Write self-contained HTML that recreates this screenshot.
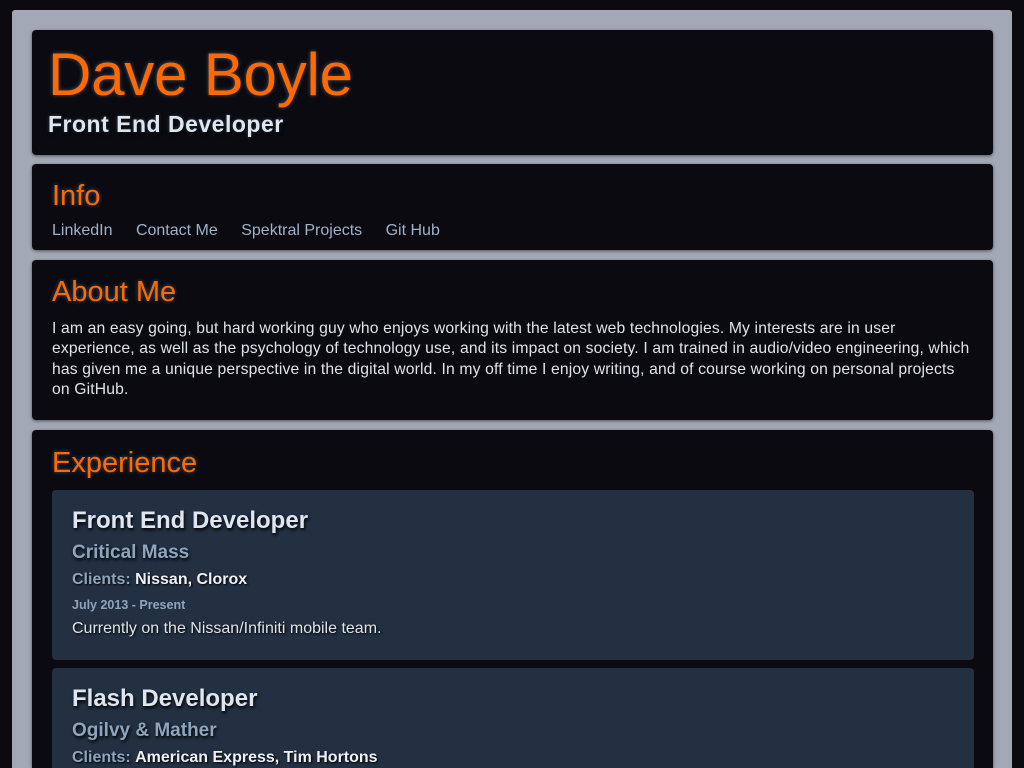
<!DOCTYPE html>
<html style="overflow:hidden;height:768px"><head><style>
*{margin:0;padding:0;box-sizing:border-box}
body{width:1024px;height:768px;overflow:hidden;background:#0a0a10;font-family:"Liberation Sans",sans-serif;position:relative}
.frame{position:absolute;left:12px;top:10px;width:1000px;height:758px;background:#a3a8b5;border-radius:3px 3px 0 0}
.p{position:absolute;left:32px;width:961px;background:#0a0a10;border-radius:4px;box-shadow:0 1px 3px rgba(0,0,0,.5);overflow:hidden}
.o{color:#ff6a00;text-shadow:0 0 4px rgba(130,160,200,.5);font-weight:normal}
h1.o{position:absolute;left:16px;top:10px;font-size:60px;letter-spacing:-.2px}
.sub{position:absolute;left:16px;top:81px;font-size:23px;letter-spacing:.5px;font-weight:bold;color:#e0e6f0;text-shadow:1px 2px 3px #000,0 0 3px rgba(140,170,210,.5)}
h2.o{position:absolute;left:20px;font-size:29px}
.links{position:absolute;left:20px;top:58px;font-size:16px;color:#9fb2c8}
.links span{margin-right:19px}
.about{position:absolute;left:20px;top:59px;width:922px;font-size:15.7px;letter-spacing:.15px;line-height:20.3px;color:#dfe3ea}
.card{position:absolute;left:20px;width:922px;background:#223042;border-radius:4px}
.card .t{position:absolute;left:20px;top:17px;font-size:24px;font-weight:bold;color:#e0e6f0;text-shadow:1px 2px 3px #000}
.card .c{position:absolute;left:20px;top:52px;font-size:19px;font-weight:bold;color:#8ea5bd;text-shadow:1px 2px 3px #000}
.card .cl{position:absolute;left:20px;top:81px;font-size:16px;font-weight:bold;color:#8ea5bd;text-shadow:1px 1px 2px #000}
.card .cl b{color:#eef1f5}
.card .d{position:absolute;left:20px;top:108px;font-size:12.5px;font-weight:bold;color:#8ea5bd}
.card .x{position:absolute;left:20px;top:130px;font-size:16px;color:#dfe3ea;text-shadow:1px 1px 2px #000}
</style></head><body>
<div class="frame"></div>
<div class="p" style="top:30px;height:125px"><h1 class="o">Dave Boyle</h1><div class="sub">Front End Developer</div></div>
<div class="p" style="top:164px;height:86px"><h2 class="o" style="top:16px">Info</h2>
<div class="links"><span>LinkedIn</span> <span>Contact Me</span> <span>Spektral Projects</span> <span>Git Hub</span></div></div>
<div class="p" style="top:260px;height:160px"><h2 class="o" style="top:16px">About Me</h2>
<div class="about">I am an easy going, but hard working guy who enjoys working with the latest web technologies. My interests are in user experience, as well as the psychology of technology use, and its impact on society. I am trained in audio/video engineering, which has given me a unique perspective in the digital world. In my off time I enjoy writing, and of course working on personal projects on GitHub.</div></div>
<div class="p" style="top:430px;height:338px;border-radius:4px 4px 0 0"><h2 class="o" style="top:17px">Experience</h2>
<div class="card" style="top:60px;height:170px"><div class="t">Front End Developer</div><div class="c">Critical Mass</div><div class="cl">Clients: <b>Nissan, Clorox</b></div><div class="d">July 2013 - Present</div><div class="x">Currently on the Nissan/Infiniti mobile team.</div></div>
<div class="card" style="top:238px;height:100px;border-radius:4px 4px 0 0"><div class="t">Flash Developer</div><div class="c">Ogilvy &amp; Mather</div><div class="cl">Clients: <b>American Express, Tim Hortons</b></div></div>
</div>
</body></html>
